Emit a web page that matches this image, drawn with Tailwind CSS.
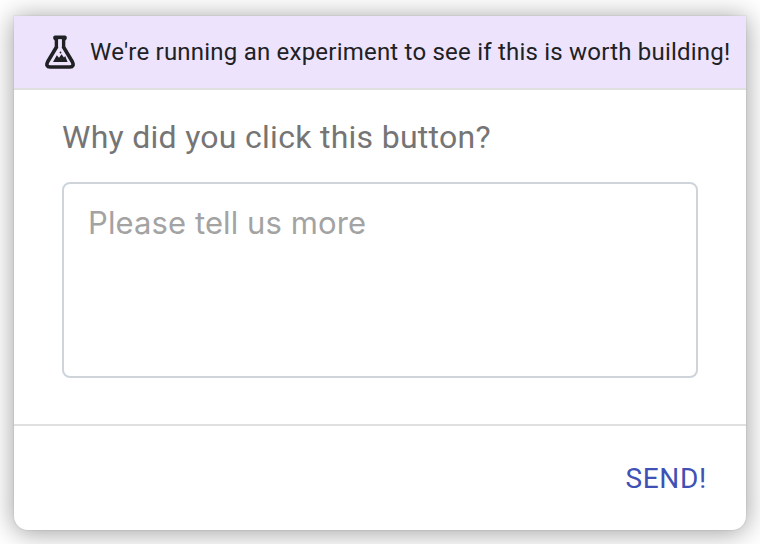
<!DOCTYPE html>
<html lang="en">
<head>
<meta charset="utf-8">
<title>Experiment feedback</title>
<script src="https://cdn.jsdelivr.net/npm/@tailwindcss/browser@4"></script>
</head>
<body class="h-[544px] overflow-hidden bg-white px-3.5 pt-4 font-['Roboto',sans-serif]">
  <main class="flex h-[514px] w-[732px] flex-col rounded-b-[14px] bg-white shadow-[0_0_1px_1px_#0000000c,0_2px_26px_1px_#00000060]">
    <header class="flex h-[74px] shrink-0 items-center border-b-2 border-[#e0e0e0] bg-[#ede3fd] pl-[31px]">
      <svg class="h-[34px] w-[30px] shrink-0" viewBox="0 0 30 34" fill="none">
        <path d="M10 3.2V2.4H20V3.2L18.5 5V12L27.2 26.5C29 30 28 32 25 32H5C2 32 1 30 2.8 26.5L11.5 12V5Z" stroke="#202124" stroke-width="3.6" stroke-linejoin="round"/>
        <path d="M13.2 4.5H16.8V12H13.2Z" fill="#ede3fd"/>
        <path d="M8 27L11.8 20.2L14 22.8L16.5 19.2L19 22.5L20.2 21L22.6 27Z" fill="#202124"/>
        <circle cx="15.5" cy="17.5" r=".9" fill="#202124"/>
      </svg>
      <p class="ml-[15px] whitespace-nowrap text-2xl tracking-[0.215px] text-[#202124]">We're running an experiment to see if this is worth building!</p>
    </header>
    <section class="flex h-[336px] shrink-0 flex-col border-b-2 border-[#e0e0e0] px-12 pt-[27px]">
      <label for="reason" class="whitespace-nowrap text-[32px] leading-10 tracking-[0.28px] text-[#757575]">Why did you click this button?</label>
      <textarea id="reason" placeholder="Please tell us more" class="mt-[25px] h-[196px] w-[636px] resize-none rounded-lg border-2 border-[#ced4da] px-6 pt-[19px] font-['Inter',sans-serif] text-[31px] leading-[40px] tracking-[0.1px] placeholder:text-[#a3a3a3]"></textarea>
    </section>
    <footer class="flex flex-1 items-center justify-end pr-[39px] pt-0.5">
      <button class="text-[28px] leading-8 tracking-[0.7px] text-[#3f51b5]">SEND!</button>
    </footer>
  </main>
</body>
</html>
